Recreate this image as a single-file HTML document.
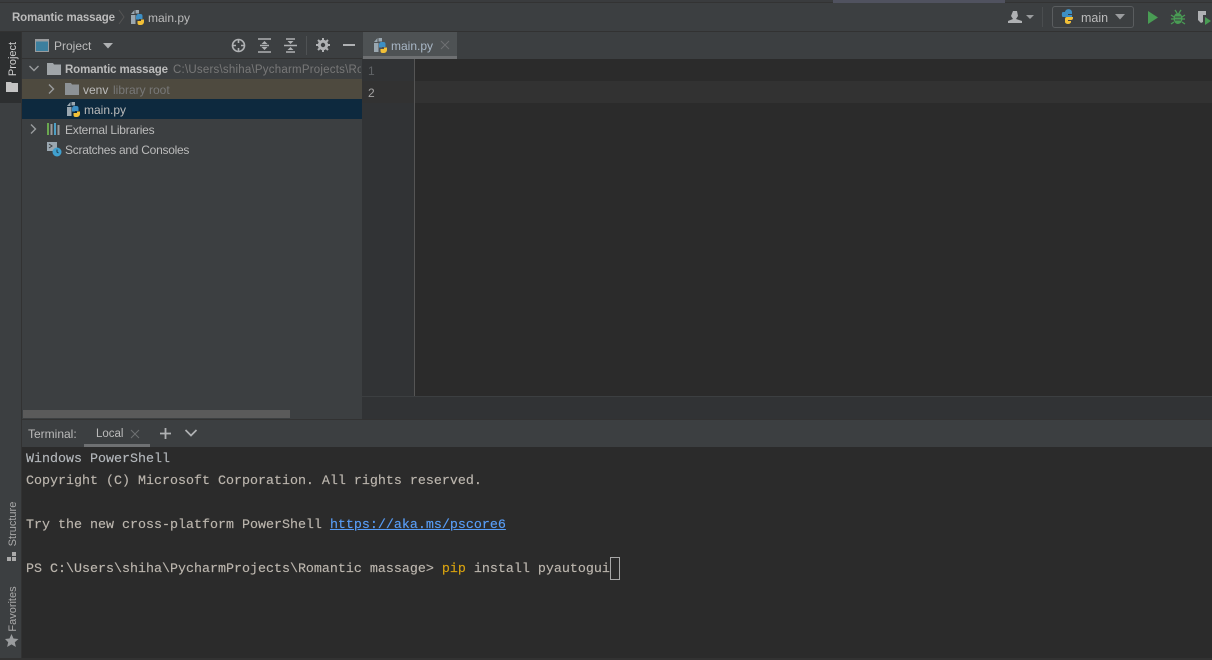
<!DOCTYPE html>
<html><head><meta charset="utf-8">
<style>
html,body{margin:0;padding:0}
body{width:1212px;height:660px;overflow:hidden;position:relative;background:#3c3f41;font-family:"Liberation Sans",sans-serif;font-size:12px;color:#bbb}
.a{position:absolute}
.t{position:absolute;white-space:pre;line-height:16px}
.m{position:absolute;white-space:pre;font-family:"Liberation Mono",monospace;font-size:13.33px;line-height:22px;left:26px;color:#bcb6ae;-webkit-text-stroke:.15px currentColor}
svg{position:absolute;overflow:visible}
</style></head><body>
<svg width="0" height="0" style="left:0;top:0"><defs><g id="pf"><path d="M0 4L3.500 0V4ZM4.500 0H8V3.500H4.500ZM0 5H4.500V14H0Z" fill="#9aa7b0"/><path d="M5 9.500V6.500A2.500 2.500 0 0 1 7.500 4H9.500A2 2 0 0 1 11.500 6V9H8v.5z" fill="#3d8fc4"/><path d="M13 9.500v2.500A3 3 0 0 1 10 15H8.500A2 2 0 0 1 6.500 13V11H10V9.500z" fill="#f2c037"/></g></defs></svg>
<!-- top strip -->
<div class="a" style="left:0;top:0;width:1212px;height:2px;background:#3a3c3e;border-bottom:1px solid #333"></div>
<div class="a" style="left:833px;top:0;width:172px;height:3px;background:#50525f"></div>
<!-- nav bar -->
<div class="t" style="left:12px;top:10px;font-weight:bold;font-size:11.500px;letter-spacing:-.12px;color:#bbb">Romantic massage</div>
<svg style="left:118px;top:9px" width="8" height="18"><path d="M1 1l5 7-5 7" fill="none" stroke="#555" stroke-width="1"/></svg>
<svg style="left:131px;top:10px" width="14" height="15" viewBox="0 0 14 15"><use href="#pf"/></svg>
<div class="t" style="left:148px;top:10px;color:#bbb">main.py</div>
<div class="a" style="left:0;top:31px;width:1212px;height:1px;background:#323232"></div>
<!-- right toolbar -->
<svg style="left:1008px;top:10px" width="28" height="14" viewBox="0 0 28 14"><path d="M5 1h4l1 5-2 3 6 2v2H0v-2l5-2-2-3z" fill="#afb1b3"/><path d="M18 5h8l-4 4z" fill="#9a9c9e"/></svg>
<div class="a" style="left:1042px;top:7px;width:1px;height:20px;background:#4a4d4f"></div>
<div class="a" style="left:1052px;top:6px;width:80px;height:20px;border:1px solid #5a5d5f;border-radius:3px"></div>
<svg style="left:1061px;top:9px" width="15" height="15" viewBox="0 0 15 15"><path d="M4 6V3a3 2.500 0 0 1 7 0v2H7v1h4v3H7v-1H1.500A1.500 3 0 0 1 1.500 3H4z" fill="#3d8fc4"/><path d="M12 6v3a2 2 0 0 1-2 2H7v1h3v1a3 2 0 0 1-6 0v-3a2 2 0 0 1 2-2h6z" fill="#f2c037"/></svg>
<div class="t" style="left:1081px;top:10px;font-size:12.500px;color:#bbb">main</div>
<svg style="left:1115px;top:14px" width="10" height="6"><path d="M0 0h10l-5 5.500z" fill="#9a9c9e"/></svg>
<svg style="left:1147px;top:11px" width="12" height="13"><path d="M1 0l10 6.500L1 13z" fill="#499c54"/></svg>
<svg style="left:1171px;top:10px" width="14" height="15" viewBox="0 0 14 15"><ellipse cx="7" cy="8.500" rx="4.500" ry="5.500" fill="#499c54"/><path d="M0 5l3 2M14 5l-3 2M0 9h3M14 9h-3M0 14l3-2M14 14l-3-2M4 0l2 3M10 0L8 3" stroke="#499c54" stroke-width="1.300"/><path d="M4 7h6M4 10h6" stroke="#3c3f41"/></svg>
<svg style="left:1197px;top:10px" width="15" height="16" viewBox="0 0 15 16"><path d="M1 1h8v4H6v7l-2 1-3-3z" fill="#afb1b3"/><path d="M8 7l6 4-6 4z" fill="#499c54"/></svg>

<!-- left stripe -->
<div class="a" style="left:0;top:32px;width:21px;height:628px;background:#3c3f41;border-right:1px solid #323232"></div>
<div class="a" style="left:0;top:32px;width:21px;height:71px;background:#2d2f30"></div>
<div class="t" style="left:13px;top:59px;transform:translate(-50%,-50%) rotate(-90deg);font-size:11px;color:#d0d0d0">Project</div>
<svg style="left:6px;top:82px" width="12" height="10"><path d="M0 0h5l1 1h6v9H0z" fill="#c4c4c4"/></svg>
<div class="t" style="left:13px;top:524px;transform:translate(-50%,-50%) rotate(-90deg);font-size:11px;color:#aaa">Structure</div>
<svg style="left:7px;top:552px" width="10" height="10"><path d="M5 0h4v4H5zM0 5h4v4H0zM5 5h4v4H5z" fill="#aaa"/></svg>
<div class="t" style="left:13px;top:609px;transform:translate(-50%,-50%) rotate(-90deg);font-size:11px;color:#aaa">Favorites</div>
<svg style="left:5px;top:634px" width="14" height="13"><path d="M6.500 0l2 4.500 5 .5-3.700 3.200 1.100 4.800-4.400-2.600L2.100 13l1.100-4.800L0 5l4.500-.5z" fill="#9a9c9e"/></svg>

<!-- project panel -->
<div class="a" style="left:22px;top:32px;width:340px;height:387px;background:#3c3f41"></div>
<div class="a" style="left:22px;top:58px;width:340px;height:1px;background:#323232"></div>
<svg style="left:35px;top:39px" width="14" height="13"><rect x=".5" y=".5" width="13" height="12" fill="#3c7f9e" stroke="#9a9c9e"/><rect x=".5" y=".5" width="13" height="2" fill="#9a9c9e"/></svg>
<div class="t" style="left:54px;top:38px;color:#bbb">Project</div>
<svg style="left:103px;top:43px" width="10" height="6"><path d="M0 0h10l-5 5.500z" fill="#afb1b3"/></svg>
<svg style="left:231px;top:38px" width="15" height="15" viewBox="0 0 15 15"><circle cx="7.500" cy="7.500" r="6" fill="none" stroke="#afb1b3" stroke-width="1.600"/><path d="M7.500 1v4M7.500 10v4M1 7.500h4M10 7.500h4" stroke="#afb1b3" stroke-width="1.600"/></svg>
<svg style="left:258px;top:38px" width="13" height="15" viewBox="0 0 13 15"><path d="M0 1h13M0 14h13M2 7.500h9" stroke="#afb1b3" stroke-width="1.400"/><path d="M6.500 3l3 3h-6zM6.500 12l3-3h-6z" fill="#afb1b3"/></svg>
<svg style="left:284px;top:38px" width="13" height="15" viewBox="0 0 13 15"><path d="M2 1h9M2 14h9M0 7.500h13" stroke="#afb1b3" stroke-width="1.400"/><path d="M6.500 6l-3-3h6zM6.500 9l-3 3h6z" fill="#afb1b3"/></svg>
<div class="a" style="left:306px;top:36px;width:1px;height:19px;background:#4f5254"></div>
<svg style="left:316px;top:38px" width="14" height="14" viewBox="0 0 14 14"><circle cx="7" cy="7" r="3.700" fill="none" stroke="#afb1b3" stroke-width="3"/><path d="M7 0v3M7 11v3M0 7h3M11 7h3M2 2l2 2M10 10l2 2M12 2l-2 2M4 10l-2 2" stroke="#afb1b3" stroke-width="2"/></svg>
<div class="a" style="left:343px;top:44px;width:12px;height:2px;background:#afb1b3"></div>

<!-- tree -->
<svg style="left:29px;top:65px" width="10" height="7"><path d="M.5 1l4.500 4.500L9.500 1" fill="none" stroke="#9a9c9e" stroke-width="1.400"/></svg>
<svg style="left:47px;top:63px" width="14" height="12"><path d="M0 0h6l1 1.500h7V12H0z" fill="#a0a5a9"/></svg>
<div class="t" style="left:65px;top:62px;font-weight:bold;font-size:11.500px;letter-spacing:-.12px;color:#bbb">Romantic massage</div>
<div class="t" style="left:173px;top:62px;width:188px;overflow:hidden;color:#787878;font-size:11.500px;letter-spacing:.22px">C:\Users\shiha\PycharmProjects\Romantic massage</div>
<div class="a" style="left:22px;top:79px;width:340px;height:20px;background:#4e4a3f"></div>
<svg style="left:48px;top:84px" width="7" height="10"><path d="M1 .5L5.500 5 1 9.500" fill="none" stroke="#9a9c9e" stroke-width="1.400"/></svg>
<svg style="left:65px;top:83px" width="14" height="12"><path d="M0 0h6l1 1.500h7V12H0z" fill="#8d9296"/></svg>
<div class="t" style="left:83px;top:82px;color:#bbb">venv</div>
<div class="t" style="left:113px;top:82px;color:#787878">library root</div>
<div class="a" style="left:22px;top:99px;width:340px;height:20px;background:#0d293e"></div>
<svg style="left:67px;top:102px" width="14" height="15" viewBox="0 0 14 15"><use href="#pf"/></svg>
<div class="t" style="left:84px;top:102px;color:#bbb">main.py</div>
<svg style="left:30px;top:124px" width="7" height="10"><path d="M1 .5L5.500 5 1 9.500" fill="none" stroke="#9a9c9e" stroke-width="1.400"/></svg>
<svg style="left:47px;top:123px" width="14" height="12"><path d="M0 0h2v12H0z" fill="#6aa84f"/><path d="M3.500 1h2v11h-2z" fill="#9a9c9e"/><path d="M7 0h2v12H7z" fill="#4d9fc4"/><path d="M10.500 2h2v10h-2z" fill="#9a9c9e"/></svg>
<div class="t" style="left:65px;top:122px;color:#bbb;letter-spacing:-.22px">External Libraries</div>
<svg style="left:47px;top:142px" width="15" height="15"><path d="M0 0h10v9H0z" fill="#9aa7b0"/><path d="M2 2l3 2-3 2" fill="none" stroke="#3c3f41"/><circle cx="10" cy="10" r="4.500" fill="#40a0cf"/><path d="M10 7.500V10l1.500 1" stroke="#1e3a48" fill="none"/></svg>
<div class="t" style="left:65px;top:142px;color:#bbb;letter-spacing:-.27px">Scratches and Consoles</div>
<div class="a" style="left:23px;top:410px;width:267px;height:8px;background:#5a5a5a"></div>

<!-- editor -->
<div class="a" style="left:362px;top:32px;width:850px;height:26px;background:#3c3f41"></div>
<div class="a" style="left:363px;top:32px;width:94px;height:26px;background:#4e5254"></div>
<div class="a" style="left:363px;top:56px;width:94px;height:3px;background:#6e7072"></div>
<svg style="left:374px;top:38px" width="14" height="15" viewBox="0 0 14 15"><use href="#pf"/></svg>
<div class="t" style="left:391px;top:38px;color:#a9b7c6">main.py</div>
<svg style="left:441px;top:41px" width="8" height="8"><path d="M0 0l8 8M8 0L0 8" stroke="#6e7072"/></svg>
<div class="a" style="left:362px;top:59px;width:850px;height:337px;background:#2b2b2b"></div>
<div class="a" style="left:362px;top:59px;width:53px;height:337px;background:#313335"></div>
<div class="a" style="left:362px;top:81px;width:850px;height:22px;background:#323232"></div>
<div class="a" style="left:414px;top:59px;width:1px;height:337px;background:#555"></div>
<div class="t" style="left:368px;top:63px;color:#606366">1</div>
<div class="t" style="left:368px;top:85px;color:#a4a3a3">2</div>
<div class="a" style="left:362px;top:396px;width:850px;height:23px;background:#313335;border-top:1px solid #3c3f41;box-sizing:border-box"></div>

<!-- terminal header -->
<div class="a" style="left:22px;top:419px;width:1190px;height:1px;background:#323232"></div>
<div class="a" style="left:22px;top:420px;width:1190px;height:26px;background:#3c3f41"></div>
<div class="t" style="left:28px;top:426px;font-size:12px;color:#bbb">Terminal:</div>
<div class="t" style="left:96px;top:426px;font-size:11.500px;color:#bbb">Local</div>
<svg style="left:131px;top:430px" width="8" height="8"><path d="M0 0l8 8M8 0L0 8" stroke="#6e7072"/></svg>
<div class="a" style="left:84px;top:444px;width:66px;height:3px;background:#6e7072"></div>
<svg style="left:160px;top:428px" width="11" height="11"><path d="M5.500 0v11M0 5.500h11" stroke="#afb1b3" stroke-width="1.800"/></svg>
<svg style="left:185px;top:429px" width="12" height="8"><path d="M.5 1l5.500 5.500L11.500 1" fill="none" stroke="#afb1b3" stroke-width="1.700"/></svg>

<!-- terminal -->
<div class="a" style="left:22px;top:447px;width:1190px;height:211px;background:#2b2b2b"></div>
<div class="a" style="left:0;top:658px;width:1212px;height:2px;background:#323232"></div>
<div class="m" style="top:449px;color:#b4b8bc">Windows PowerShell</div>
<div class="m" style="top:471px">Copyright (C) Microsoft Corporation. All rights reserved.</div>
<div class="m" style="top:515px">Try the new cross-platform PowerShell <span style="color:#589df6;text-decoration:underline">https://aka.ms/pscore6</span></div>
<div class="m" style="top:559px">PS C:\Users\shiha\PycharmProjects\Romantic massage&gt; <span style="color:#d9a30f">pip</span> install pyautogui</div>
<div class="a" style="left:610px;top:557px;width:8px;height:21px;border:1px solid #a8a8a8"></div>
</body></html>
